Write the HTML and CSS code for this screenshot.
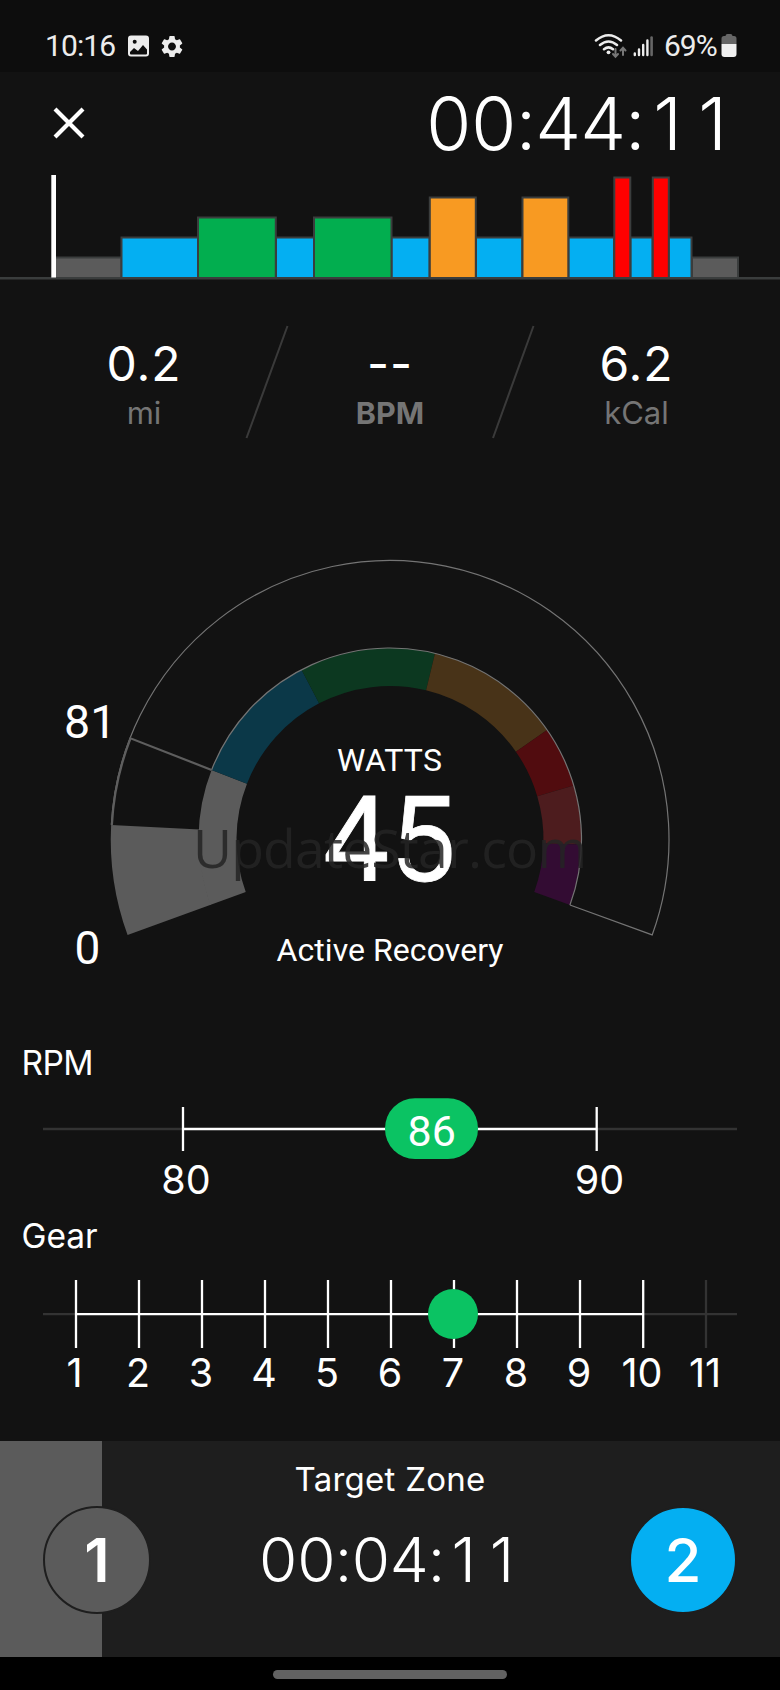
FILE: index.html
```html
<!DOCTYPE html>
<html lang="en">
<head>
<meta charset="utf-8">
<title>Workout</title>
<link rel="stylesheet" href="styles.css">
</head>
<body>
<div class="screen">
  <header class="status">
    <span class="clock">10:16</span>
    <svg class="ic-photo" width="21" height="22" viewBox="0 0 21 22"><path fill="#ececec" fill-rule="evenodd" d="M3 .5h15a3 3 0 0 1 3 3v15a3 3 0 0 1-3 3H3a3 3 0 0 1-3-3v-15a3 3 0 0 1 3-3zM6.700 4.800a2 2 0 1 0 0 4a2 2 0 1 0 0-4zM2 18.500q0 1 1 1h15q1 0 1-1v-4L15 10l-5 6-4-3-4 4z"/></svg>
    <svg class="ic-gear" width="22" height="23" viewBox="2 1.600 20 20.800"><path fill="#ececec" d="M19.140 12.940c.04-.3.060-.61.060-.94 0-.32-.02-.64-.07-.94l2.030-1.580c.18-.14.230-.41.120-.61l-1.920-3.320c-.12-.22-.37-.29-.59-.22l-2.390.96c-.5-.38-1.030-.7-1.620-.94l-.36-2.540c-.04-.24-.24-.41-.48-.41h-3.840c-.24 0-.43.170-.47.410l-.36 2.540c-.59.240-1.130.570-1.620.940l-2.390-.96c-.22-.08-.47 0-.59.220L2.740 8.870c-.12.210-.08.470.120.610l2.030 1.580c-.05.3-.09.630-.09.940s.02.640.070.940l-2.030 1.580c-.18.140-.23.410-.12.610l1.920 3.320c.12.220.37.290.59.220l2.390-.96c.5.380 1.030.7 1.620.94l.36 2.540c.05.240.24.410.48.410h3.840c.24 0 .44-.17.470-.41l.36-2.540c.59-.24 1.130-.56 1.620-.94l2.390.96c.22.080.47 0 .59-.22l1.920-3.320c.12-.22.070-.47-.12-.61l-2.010-1.580zM12 15.600c-1.980 0-3.600-1.620-3.600-3.600s1.620-3.600 3.600-3.600 3.600 1.620 3.600 3.600-1.620 3.600-3.600 3.600z"/></svg>
    <span class="spacer"></span>
    <svg class="ic-signal" width="60" height="26" viewBox="594 33 60 26" fill="none" stroke-linecap="round">
      <g stroke="#ececec" stroke-width="2.500"><path d="M596 40.500Q608.500 30 621 40.500M600 45Q608.500 38 617 45M604 49.200Q608.500 45.500 613 49.200"/></g>
      <circle cx="608.500" cy="52.300" r="1.900" fill="#ececec"/>
      <path stroke="#777" stroke-width="2" d="M615.500 49v7M613 54l2.500 2.800L618 54M623 55v-7M620.500 50.500l2.500-2.800 2.500 2.800"/>
      <g stroke="#ececec" stroke-width="2.400"><path d="M634.800 53.500v1.500M639 49.500v5.500M643.200 45v10M647.400 40.500v14.500"/></g>
      <path stroke="#666" stroke-width="2.600" d="M651.600 37.500v17.500"/>
    </svg>
    <span class="battery">69%</span>
    <svg class="ic-batt" width="16" height="23" viewBox="0 0 16 23"><path fill="#666" d="M4.500 2q0-2 2-2h3q2 0 2 2h1.500q2.500 0 2.500 2.500V10H.5V4.500Q.5 2 3 2z"/><path fill="#f0f0f0" d="M.5 10h15v10q0 3-3 3h-9q-3 0-3-3z"/></svg>
  </header>

  <section class="top">
    <svg class="close" width="32" height="32" viewBox="0 0 32 32" stroke="#fff" stroke-width="4.200"><path d="M2 2l28 28M30 2L2 30"/></svg>
    <div class="timer elapsed"><i>0</i><i>0</i><u>:</u><i>4</i><i>4</i><u>:</u><i>1</i><i>1</i></div>
  </section>

  <svg class="profile" width="780" height="110" viewBox="0 170 780 110">
    <g stroke="#3a3d3d" stroke-width="2">
      <path fill="#5b5b5b" d="M54 278v-20.500h67.500V278zM692 278v-20.500h46V278z"/>
      <path fill="#04aff2" d="M121.500 278v-40.500h76.500V278zM276 278v-40.500h38V278zM391.500 278v-40.500h38V278zM476 278v-40.500h46.300V278zM568.500 278v-40.500h45.500V278zM630.500 278v-40.500h22V278zM668.500 278v-40.500h23V278z"/>
      <path fill="#02ae4f" d="M198 278v-60.500h77.800V278zM314 278v-60.500h77.500V278z"/>
      <path fill="#f89a22" d="M429.800 278v-80.500h46V278zM522.500 278v-80.500h45.800V278z"/>
      <path fill="#f00" d="M614.300 278v-100.500h16V278zM652.800 278v-100.500h16V278z"/>
      <path stroke-width="2.600" d="M0 278.200h780"/>
    </g>
    <path fill="#fff" d="M51.300 175h4.700v102.500h-4.700z"/>
  </svg>

  <section class="stats">
    <div class="stat"><b>0.2</b><span>mi</span></div>
    <div class="stat"><b class="dash">--</b><span class="strong">BPM</span></div>
    <div class="stat"><b>6.2</b><span>kCal</span></div>
    <svg class="slashes" width="780" height="114" viewBox="0 325 780 114" stroke="#3a3a3a" stroke-width="2"><path d="M287.500 326L246.500 438M533.500 326L493 438"/></svg>
  </section>

  <svg class="gauge" width="780" height="530" viewBox="0 490 780 530">
    <g id="zones" fill="none" stroke-width="38"></g>
    <g id="outline" fill="none"></g>
    <g class="rb" fill="#fff">
      <text x="64" y="738" font-size="46.500">81</text>
      <text x="74.500" y="963.500" font-size="46">0</text>
      <text x="337" y="771" font-size="32" textLength="105">WATTS</text>
      <text x="323" y="881" font-size="118" stroke="#fff" stroke-width=".8" textLength="133">45</text>
      <text x="276.500" y="961" font-size="32" textLength="227">Active Recovery</text>
    </g>
    <text class="mark" x="193" y="868" font-size="53.500" textLength="394">UpdateStar.com</text>
  </svg>

  <svg class="rulers" width="780" height="421" viewBox="0 1020 780 421">
    <g class="it" fill="#fff">
      <text x="21.500" y="1075" font-size="33.500" textLength="72">RPM</text>
      <text x="21.500" y="1248" font-size="33.500" textLength="76">Gear</text>
    </g>
    <g fill="none" stroke-width="2.300">
      <path stroke="#333" d="M43 1129h140M597 1129h140M43 1314.200h33M643 1314.200h94M706 1280v68"/>
      <path stroke="#fff" d="M183 1129h414M183 1107v44M596.700 1107v44M76 1314.200h567M76 1280v68M139 1280v68M202 1280v68M265 1280v68M328 1280v68M391 1280v68M454 1280v68M517 1280v68M580 1280v68M643.200 1280v68"/>
    </g>
    <rect x="385" y="1098.300" width="93" height="60.700" rx="30" fill="#0bc363"/>
    <circle cx="453" cy="1314" r="25" fill="#0bc363"/>
    <text class="rb" x="407.500" y="1145.500" font-size="43" fill="#fff">86</text>
    <g class="it" fill="#fff" font-size="39.500" text-anchor="middle">
      <text x="186" y="1194">80</text><text x="599.500" y="1194">90</text>
      <text x="74.500" y="1387">1</text><text x="138" y="1387">2</text><text x="201" y="1387">3</text><text x="264" y="1387">4</text><text x="327" y="1387">5</text><text x="390" y="1387">6</text><text x="453" y="1387">7</text><text x="516" y="1387">8</text><text x="579" y="1387">9</text><text x="642" y="1387">10</text><text x="705" y="1387">11</text>
    </g>
  </svg>

  <footer class="zone">
    <div class="badge one">1</div>
    <div class="target"><div class="label">Target Zone</div><div class="timer remain"><i>0</i><i>0</i><u>:</u><i>0</i><i>4</i><u>:</u><i>1</i><i>1</i></div></div>
    <div class="badge two">2</div>
  </footer>
  <nav class="nav"><i></i></nav>
</div>
<script src="gauge.js"></script>
</body>
</html>
```

FILE: styles.css
```css
* { box-sizing: border-box; }
body { margin: 0; background: #121212; color: #fff; font-family: Inter, "Liberation Sans", sans-serif; }
svg { display: block; flex: none; }
.screen { width: 780px; height: 1690px; display: flex; flex-direction: column; overflow: hidden; }
.status { height: 72px; background: #0d0d0d; display: flex; align-items: flex-start; padding: 0 43px 0 45px; font-family: Roboto, sans-serif; color: #ececec; }
.clock { font-size: 30px; line-height: 36px; letter-spacing: -0.9px; padding-top: 28px; width: 83px; white-space: nowrap; }
.ic-photo { margin-top: 35px; }
.ic-gear { margin: 35px 0 0 12px; }
.spacer { flex: 1; }
.ic-signal { margin-top: 33px; }
.battery { font-size: 30px; line-height: 36px; letter-spacing: -1px; margin: 28px 0 0 10px; width: 57px; white-space: nowrap; }
.ic-batt { margin-top: 34px; }
.top { height: 98px; display: flex; justify-content: space-between; padding: 0 45px 0 53px; }
.close { margin-top: 35px; }
.timer { display: flex; font-weight: 300; white-space: nowrap; }
.timer i, .timer u { display: flex; justify-content: center; font-style: normal; text-decoration: none; }
.elapsed { font-size: 73px; line-height: 88px; padding-top: 8px; }
.elapsed i { width: 45px; }
.elapsed u { width: 19.3px; }
.stats { position: relative; height: 210px; padding: 56px 20px 0 21px; display: grid; grid-template-columns: 246px 246px 247px; }
.stat { display: flex; flex-direction: column; align-items: center; }
.stat b { font-size: 48px; font-weight: 400; line-height: 56px; letter-spacing: 1px; }
.stat span { font-size: 31px; line-height: 42px; color: #757575; }
.stat .strong { font-weight: 700; font-size: 30.5px; }
.slashes { position: absolute; left: 0; top: 45px; }
.rb { font-family: Roboto, sans-serif; }
.it { font-family: Inter, sans-serif; }
.mark { font-family: "Open Sans", "Noto Sans", sans-serif; fill: #252525; fill-opacity: .85; }
.zone { height: 216px; display: flex; justify-content: space-between; padding: 0 43px; background: linear-gradient(90deg, #5b5b5b 102px, #1e1e1e 102px); }
.badge { width: 108px; height: 108px; border-radius: 50%; border: 2px solid #1e1e1e; margin-top: 65px; display: flex; align-items: center; justify-content: center; font-size: 60px; font-weight: 600; }
.one { background: #5b5b5b; }
.two { background: #04aff2; font-weight: 500; }
.target { padding-top: 18px; text-align: center; }
.label { font-size: 33px; line-height: 40px; letter-spacing: .25px; }
.remain { font-size: 62px; line-height: 75px; margin-top: 23px; }
.remain i { width: 38.3px; }
.remain u { width: 16.2px; }
.nav { height: 33px; background: #000; display: flex; justify-content: center; padding-top: 13px; }
.nav i { width: 234px; height: 9px; border-radius: 5px; background: #626262; }
```

FILE: gauge.js
```javascript
// Angles are degrees clockwise from the left horizontal.
const CX = 390, CY = 839.5;
const NS = 'http://www.w3.org/2000/svg';
const pt = (r, a) => {
  const t = a * Math.PI / 180;
  return (CX - r * Math.cos(t)).toFixed(2) + ' ' + (CY - r * Math.sin(t)).toFixed(2);
};
const arc = (r, a, b) => `M${pt(r, a)}A${r} ${r} 0 ${b - a > 180 ? 1 : 0} 1 ${pt(r, b)}`;
const add = (id, d, stroke, width) => {
  const p = document.createElementNS(NS, 'path');
  p.setAttribute('d', d);
  p.setAttribute('stroke', stroke);
  if (width) p.setAttribute('stroke-width', width);
  document.getElementById(id).appendChild(p);
};
[[-20, 21.3, '#5b5b5b'], [21.3, 62.5, '#0b3848'], [62.5, 103.6, '#0c3820'],
 [103.6, 145.1, '#483318'], [145.1, 163.6, '#510c0f'], [163.6, 181.5, '#4d1c1e'],
 [181.5, 200, '#330c33']].forEach(([a, b, c]) => add('zones', arc(172.5, a, b), c));
add('zones', arc(235, -20, 3), '#5b5b5b', 88.5);
add('outline', arc(279, 3, 200) + 'L' + pt(191.5, 200), '#747474', 1.2);
add('outline', arc(191.5, 21.3, 200), '#747474', 1.2);
add('outline', arc(278.5, 3, 21.3) + 'L' + pt(191.5, 21.3), '#5e5e5e', 2.2);
```
